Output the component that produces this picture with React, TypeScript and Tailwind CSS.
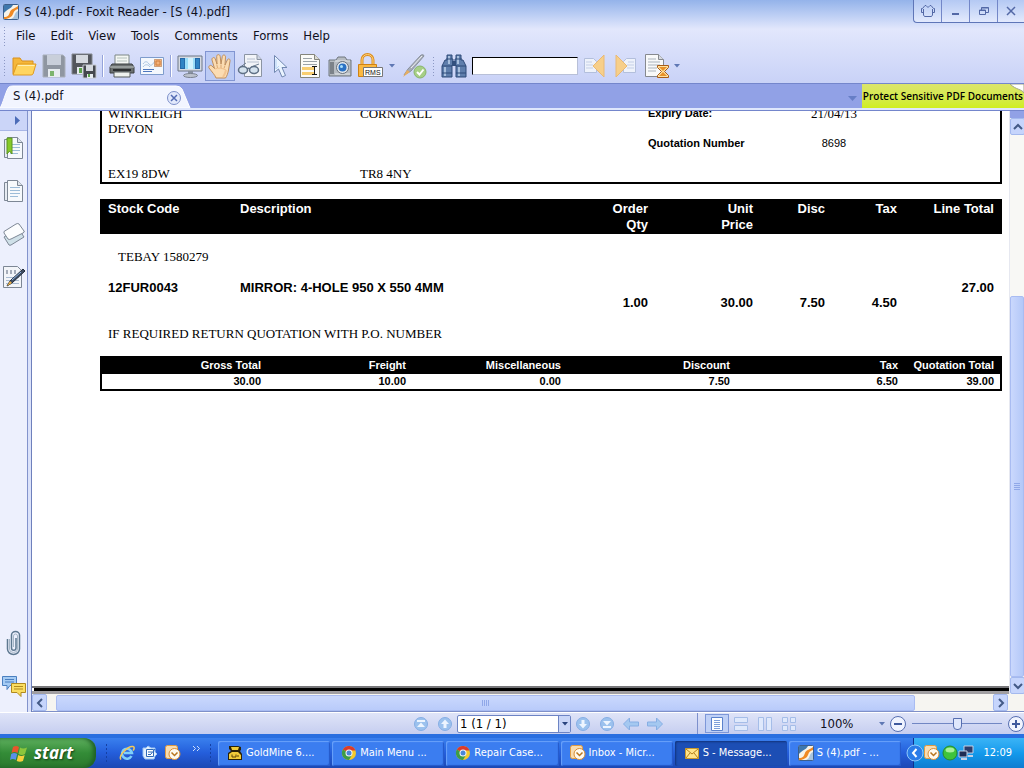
import type { ReactNode } from "react"

const MENUS = ["File", "Edit", "View", "Tools", "Comments", "Forms", "Help"]

const ADDRESS_ROWS = [
  ["WINKLEIGH", "CORNWALL", "Expiry Date:", ""],
  ["DEVON", "", "", ""],
  ["", "", "Quotation Number", "8698"],
  ["", "", "", ""],
  ["EX19 8DW", "TR8 4NY", "", ""],
]

const EXPIRY_DATE = "21/04/13"

const TOTALS = [
  { label: "Gross Total", value: "30.00", width: "" },
  { label: "Freight", value: "10.00", width: "w-[145px]" },
  { label: "Miscellaneous", value: "0.00", width: "w-[155px]" },
  { label: "Discount", value: "7.50", width: "w-[169px]" },
  { label: "Tax", value: "6.50", width: "w-[168px]" },
  { label: "Quotation Total", value: "39.00", width: "w-[96px]" },
]

interface IconProps {
  children: ReactNode
  size?: number
}

function Icon({ children, size = 26 }: IconProps) {
  return (
    <svg width={size} height={size} viewBox={`0 0 ${size} ${size}`} fill="none" aria-hidden="true" className="shrink-0">
      {children}
    </svg>
  )
}

function FoxitLogo() {
  return (
    <Icon size={16}>
      <rect x="0.5" y="0.5" width="15" height="15" rx="1" fill="#f7f3ea" stroke="#3d5f8c" />
      <path d="M1 1h9C8 5 4 5 1 9z" fill="#3f78ad" />
      <path d="M15 2v3c-3 1-4 2-5 5s-4 4-7 5H1v-2c4 0 5-2 6-5s4-3 8-6z" fill="#f08a24" />
      <path d="M15 7v8H8c3-1 3-3 4-5s1-2 3-3z" fill="#a9c4de" />
    </Icon>
  )
}

function FolderIcon() {
  return (
    <Icon>
      <path d="M2 21V5h7l2 3h11v4" fill="#f5b73a" stroke="#d9901c" />
      <path d="M2 22 6 11h19l-3 10q-.5 1-2 1z" fill="#ffd560" stroke="#e09a20" />
      <path d="M7 12.500h16.500" stroke="#fff0b4" />
    </Icon>
  )
}

function DiskIcon() {
  return (
    <Icon>
      <path d="M2 2h20l2 2v20H2z" fill="#8f96a1" stroke="#aab0bb" />
      <path d="M6 2h14v10H6z" fill="#c9cfda" />
      <path d="M7 16h12v8H7z" fill="#e7ecef" />
      <path d="M9 18h4v5H9z" fill="#7cb46c" />
    </Icon>
  )
}

function SaveAllIcon() {
  return (
    <Icon>
      <path d="M1 1h20v20H1z" fill="#53565c" stroke="#85898f" />
      <path d="M5 2h12v8H5z" fill="#d5d9df" />
      <path d="M6 14h8v7H6z" fill="#e7ecef" />
      <path d="M8 15h3v5H8z" fill="#5da34a" />
      <path d="M12 12h13v13H12z" fill="#45484e" stroke="#c5c9cf" />
      <path d="M15 12h7v6h-7z" fill="#d5d9df" />
      <path d="M16 21h6v4h-6z" fill="#e7ecef" />
      <path d="M17 21h2v3h-2z" fill="#5da34a" />
    </Icon>
  )
}

function PrinterIcon() {
  return (
    <Icon>
      <path d="M6 2h14v10H6z" fill="#f4f7f4" stroke="#7d8785" />
      <path d="M8 5h10M8 8h10" stroke="#b4c0bb" />
      <path d="M3 11h20l2 3v6H1v-6z" fill="#6b7070" stroke="#3a3e40" />
      <path d="M1 14h24" stroke="#c3c9c7" />
      <path d="M4 16h18v2H4z" fill="#2c2f30" />
      <path d="M5 19h16v5H5z" fill="#eef2ee" stroke="#555b5b" />
    </Icon>
  )
}

function MailCardIcon() {
  return (
    <Icon>
      <path d="M1.500 4.500h23v17h-23z" fill="#f4f8fd" stroke="#7e9ccc" />
      <path d="M4 11c2-3 4-3 6 0s4 0 6-3" stroke="#a8c4e0" />
      <path d="M4 14c2-3 5-3 7 0" stroke="#a8c4e0" />
      <path d="M15.500 6.500h7v7h-7z" fill="#f3b27a" stroke="#a8683a" strokeDasharray="1 1" />
      <path d="M17 8h4v4h-4z" stroke="#d08040" />
      <path d="M4 16.500h11M4 18.500h9" stroke="#4e78be" />
    </Icon>
  )
}

function MonitorIcon() {
  return (
    <Icon>
      <path d="M1 3h24v15H1z" fill="#d5dae2" stroke="#6c7685" />
      <path d="M3 5h20v11H3z" fill="#2468a8" />
      <path d="M8 5h10v11H8z" fill="#9adcf8" />
      <path d="M11 5h5v11h-5z" fill="#d2f2fe" />
      <path d="M4 6h3v9H4zM19 6h3v9h-3z" fill="#2f83c4" />
      <path d="M11 18h5v3h-5z" fill="#8891a0" />
      <ellipse cx="13.500" cy="22.500" rx="7" ry="2" fill="#bcc2cd" stroke="#7a8290" />
    </Icon>
  )
}

function HandIcon() {
  return (
    <Icon>
      <path
        d="M9 25c-1-3-4-6-7-10-1-2 1.500-3.500 3-2l2.500 2.500L5 7c-.5-2.500 2.500-3.500 3.300-1L10 11l-.3-7.500c0-2.500 3.300-2.500 3.500 0L14 11l1.300-7.500c.4-2.300 3.500-1.800 3.200.6L18 12l2.300-5c.9-2 3.300-1 2.700 1.200L21.500 17c-.5 3-1.500 6-3 8z"
        fill="#fbdcb2"
        stroke="#c08f5c"
      />
      <path d="M9.800 11.500 10.500 15M14 11.500V15M18 12.500 17 15.500" stroke="#dba873" />
      <path d="M8 16c3-1.500 7-1 11 1" stroke="#f0c08c" />
      <path d="M19 17c-.5 3-1.500 5-3 7" stroke="#f2c491" strokeWidth="2" />
    </Icon>
  )
}

function GlassesPageIcon() {
  return (
    <Icon>
      <path d="M7.500 1.500H20l4.500 5v17h-17z" fill="#f2f4f8" stroke="#8b94a3" />
      <path d="M20 1.500v5h4.500" fill="#cfd6e2" stroke="#8b94a3" />
      <path d="M10 6h8M10 9h12" stroke="#b7c0d0" />
      <path d="M2 15 9 10M14 14l8-3" stroke="#6d7d91" />
      <ellipse cx="6" cy="17" rx="4.500" ry="3.500" fill="#d4e2ee" stroke="#5f7085" strokeWidth="1.500" />
      <ellipse cx="17" cy="17" rx="4.500" ry="3.500" fill="#d4e2ee" stroke="#5f7085" strokeWidth="1.500" />
      <path d="M10 16q1.500-1.500 3 0" stroke="#5f7085" strokeWidth="1.500" />
    </Icon>
  )
}

function PointerIcon() {
  return (
    <Icon>
      <path d="M7.500 2.500v17l4-3.500 3.500 8 3.500-1.500-3.500-8h5z" fill="#eaf4ff" stroke="#7187b0" />
      <path d="M9 6v10l3-3" stroke="#b4d2f4" />
    </Icon>
  )
}

function TextSelectIcon() {
  return (
    <Icon>
      <path d="M3.500 1.500h14l5 5v18h-19z" fill="#fbfbf8" stroke="#84857c" />
      <path d="M17.500 1.500v5h5" fill="#dcdcd4" stroke="#84857c" />
      <path d="M6 5.500h9M6 8.500h14M6 11.500h14" stroke="#9ba3a8" />
      <path d="M5 14h12v3H5zM5 19h12v3H5z" fill="#f8ce72" />
      <path d="M15 13.500h5M15 21.500h5M17.500 13.500v8" stroke="#151515" />
    </Icon>
  )
}

function CameraIcon() {
  return (
    <Icon>
      <path d="M2 7h7l2-3h7l2 3h4v16H2z" fill="#b7bcc2" stroke="#6f767f" />
      <path d="M3 9h4v12H3z" fill="#7c8289" />
      <path d="M8 8h15M8 21h15" stroke="#e4e7ea" />
      <circle cx="15.500" cy="14.500" r="6" fill="#e6eaee" stroke="#67707c" />
      <circle cx="15.500" cy="14.500" r="4" fill="#2c72c4" />
      <circle cx="14.500" cy="13.500" r="1.500" fill="#a9e0fb" />
    </Icon>
  )
}

function RmsIcon() {
  return (
    <Icon>
      <path d="M5 11V7a5.500 5.500 0 0 1 11 0v4" stroke="#dc8e1f" strokeWidth="3" />
      <path d="M5 11V7a5.500 5.500 0 0 1 11 0v4" stroke="#ffd27a" />
      <path d="M1.500 11.500h18v12h-18z" fill="#fbb840" stroke="#cf8214" />
      <path d="M6.500 14.500h19v9h-19z" fill="#fff" stroke="#777" />
      <text x="8" y="22" fontSize="7" fill="#111" fontFamily="Liberation Sans, sans-serif">RMS</text>
    </Icon>
  )
}

function SignIcon() {
  return (
    <Icon>
      <path d="M3 22 7 16 20 2q3-1 3 1L10 18z" fill="#a6acb6" stroke="#8a919d" />
      <path d="M10 15 21 3" stroke="#eef1f5" />
      <path d="m2 24 4-7 3 2z" fill="#e6ae62" />
      <circle cx="19" cy="19" r="6" fill="#a6cf86" stroke="#89b46c" />
      <path d="m16 19 2.500 2.500 4-5" stroke="#fff" strokeWidth="2" />
    </Icon>
  )
}

function BinocularsIcon() {
  return (
    <Icon>
      <path d="M6 2h5v4h1v6h-1v12H1V13l3-6h2zM15 2h5v5h2l3 6v11H15V12h-1V6h1z" fill="#5f7eac" stroke="#2f4a78" />
      <path d="M11 8h4v5h-4z" fill="#32507e" />
      <path d="M4 14v9M18 14v9M8 3v8M17 3v8" stroke="#a9c0de" strokeWidth="2" />
      <path d="M1 13h10M15 13h10M1 20h10M15 20h10M5 6h6M15 6h6" stroke="#2f4a78" />
    </Icon>
  )
}

function ResultIcon({ next = false }: { next?: boolean }) {
  return (
    <Icon>
      <g transform={next ? "matrix(-1 0 0 1 26 0)" : undefined}>
        <path d="M2.500 5.500h9l3 3v11h-12z" fill="#eef2fb" stroke="#b3bfdc" />
        <path d="M4 9h6M4 12h7M4 15h7" stroke="#c4cfe6" />
        <path d="M22 2v22L11 13z" fill="#f7cf8a" stroke="#e9b974" />
      </g>
    </Icon>
  )
}

function HourglassPageIcon() {
  return (
    <Icon>
      <path d="M1.500 1.500h13l5 5v17h-18z" fill="#f8f9fa" stroke="#86898f" />
      <path d="M14.500 1.500v5h5" fill="#d7dbe1" stroke="#86898f" />
      <path d="M4 6h8M4 9h12M4 12h12M4 15h9M4 18h8" stroke="#aab3bc" />
      <path d="M13.500 12.500h11v2l-4 4 4 4v2h-11v-2l4-4-4-4z" fill="#ffe1a0" stroke="#a85b16" />
      <path d="M15 14h8l-4 4zM19 19l4 4h-8z" fill="#e8912a" />
    </Icon>
  )
}

function Caret() {
  return (
    <svg width="6" height="4" viewBox="0 0 6 4" aria-hidden="true">
      <path d="M0 0h6L3 3.500z" fill="#5f78b4" />
    </svg>
  )
}

function ToolButton({ label, active, children }: { label: string; active?: boolean; children: ReactNode }) {
  return (
    <button
      type="button"
      aria-label={label}
      className={
        active
          ? "flex h-[30px] w-[30px] items-center justify-center border border-[#8195d2] bg-[#bccbf5]"
          : "flex h-[30px] w-[30px] items-center justify-center"
      }
    >
      {children}
    </button>
  )
}

function Grip() {
  return <span className="h-5 w-[3px] bg-[radial-gradient(#8c98c4_1px,transparent_1px)] bg-[size:3px_3px]" />
}

function Separator() {
  return (
    <span className="flex w-2 justify-center">
      <span className="h-[22px] w-[2px] border-l border-[#94a3da] bg-white" />
    </span>
  )
}

function TitleBar() {
  return (
    <div className="flex h-[23px] items-start justify-between">
      <div className="flex h-[23px] items-center gap-[5px] pl-[3px]">
        <FoxitLogo />
        <h1>S (4).pdf - Foxit Reader - [S (4).pdf]</h1>
      </div>
      <div className="flex h-[23px] divide-x divide-[#7387c8] overflow-hidden rounded-bl border-b border-l border-[#5f76b8] bg-linear-to-b from-[#b4c9f3] to-[#e3eafd]">
        <button type="button" aria-label="Skin" className="flex w-7 items-center justify-center">
          <svg width="14" height="12" viewBox="0 0 14 12" fill="none">
            <path d="M5 .5H4L1.500 3.500H.5v4h2V10l1 1.500h7l1-1.500V7.500h2v-4h-1L10 .5H9L7 2.500zM2.500 4v4M11.500 4v4" stroke="#5368a6" />
          </svg>
        </button>
        <button type="button" aria-label="Minimize" className="flex w-7 items-center justify-center">
          <svg width="12" height="12" viewBox="0 0 12 12"><path d="M2 8h7v2H2z" fill="#5368a6" /></svg>
        </button>
        <button type="button" aria-label="Restore" className="flex w-7 items-center justify-center">
          <svg width="10" height="10" viewBox="0 0 10 10" fill="none">
            <path d="M2.500 4V1.500h7v5H7M.5 4h6v4.500h-6zM2.500 2h7M.5 4.500h6" stroke="#5368a6" />
          </svg>
        </button>
        <button type="button" aria-label="Close" className="flex w-[26px] items-center justify-center">
          <svg width="10" height="10" viewBox="0 0 10 10"><path d="m1 1 8 8M9 1 1 9" stroke="#5368a6" strokeWidth="1.500" /></svg>
        </button>
      </div>
    </div>
  )
}

function Toolbar() {
  return (
    <div className="flex h-[34px] items-center pl-[3px]">
      <Grip />
      <div className="ml-[3px] flex items-center">
        <ToolButton label="Open"><FolderIcon /></ToolButton>
        <ToolButton label="Save"><DiskIcon /></ToolButton>
        <ToolButton label="Save all"><SaveAllIcon /></ToolButton>
        <Separator />
        <ToolButton label="Print"><PrinterIcon /></ToolButton>
        <ToolButton label="Email"><MailCardIcon /></ToolButton>
        <Separator />
        <ToolButton label="Full screen"><MonitorIcon /></ToolButton>
        <ToolButton label="Hand" active><HandIcon /></ToolButton>
        <ToolButton label="Read mode"><GlassesPageIcon /></ToolButton>
        <ToolButton label="Select annotation"><PointerIcon /></ToolButton>
        <ToolButton label="Select text"><TextSelectIcon /></ToolButton>
        <ToolButton label="Snapshot"><CameraIcon /></ToolButton>
        <ToolButton label="RMS protect"><RmsIcon /></ToolButton>
        <button type="button" aria-label="RMS options" className="px-1"><Caret /></button>
        <ToolButton label="Sign"><SignIcon /></ToolButton>
      </div>
      <div className="ml-[3px] flex items-center">
        <Grip />
        <span className="ml-1"><ToolButton label="Find"><BinocularsIcon /></ToolButton></span>
        <input
          type="text"
          aria-label="Find text"
          className="ml-[3px] h-[18px] w-[106px] border border-[#b8c0d8] border-t-black border-l-black bg-white px-1 text-xs"
        />
        <span className="ml-[2px]"><ToolButton label="Previous result"><ResultIcon /></ToolButton></span>
        <ToolButton label="Next result"><ResultIcon next /></ToolButton>
        <span className="ml-[2px]"><ToolButton label="Search all"><HourglassPageIcon /></ToolButton></span>
        <button type="button" aria-label="Search options" className="ml-[2px]"><Caret /></button>
      </div>
    </div>
  )
}

function TabBar() {
  return (
    <div className="flex h-[25px] border-t border-[#7486cc] bg-[#91a1e6]">
      <div className="relative flex w-[191px] items-center justify-between pr-2.5 pl-[13px]">
        <svg viewBox="0 0 191 24" preserveAspectRatio="none" className="absolute inset-0 h-full w-full" aria-hidden="true">
          <path d="M0 24C3 20 6 6 9 3q1-1 4-1h163q4 0 6 3l8 19z" fill="#f2f5ff" stroke="#fff" />
        </svg>
        <span className="relative">S (4).pdf</span>
        <button type="button" aria-label="Close tab" className="relative mt-1">
          <svg width="14" height="14" viewBox="0 0 14 14" fill="none">
            <circle cx="7" cy="7" r="6.500" fill="#e2e9fc" stroke="#7c8fc9" />
            <path d="m4 4 6 6m0-6-6 6" stroke="#536cb4" strokeWidth="1.500" />
          </svg>
        </button>
      </div>
      <div className="flex flex-1 items-center justify-end pt-1 pr-[5px]">
        <button type="button" aria-label="Tab list">
          <svg width="9" height="5" viewBox="0 0 9 5"><path d="M0 0h9L4.500 5z" fill="#667ec6" /></svg>
        </button>
      </div>
      <a
        href="#protect"
        className="relative flex shrink-0 items-center bg-linear-to-b from-[#dce56a] to-[#d0ee1c] px-px font-['Open_Sans',sans-serif] text-[10px] leading-6 font-semibold whitespace-nowrap text-black"
      >
        <svg width="14" height="10" viewBox="0 0 14 10" className="absolute top-0 right-0" aria-hidden="true">
          <path d="M0 0h14v9C12 5 6 6 0 0z" fill="#fff" stroke="#a4a886" />
        </svg>
        <span className="relative">Protect Sensitive PDF Documents</span>
      </a>
    </div>
  )
}

function PageSheet({ children }: { children?: ReactNode }) {
  return (
    <Icon size={24}>
      <path d="M2.500 3.500h13v18h-13z" fill="#e6ebf2" stroke="#7d8795" />
      <path d="M5.500 1.500h10l5 5v16h-15z" fill="#f6f9fc" stroke="#7d8795" />
      <path d="M15.500 1.500v5h5" fill="#dde4ec" stroke="#7d8795" />
      <path d="M8 8.500h10M8 11.500h10M8 14.500h10M8 17.500h8" stroke="#9cbcd8" />
      {children}
    </Icon>
  )
}

function SideNav() {
  return (
    <nav className="flex w-7 shrink-0 flex-col items-center border-r border-[#8293cc] bg-[#edf0fd]">
      <button type="button" aria-label="Expand panel" className="flex h-5 w-full items-center justify-center border-b border-[#a9b6e6] bg-[#cbd5f8] pl-2">
        <svg width="5" height="9" viewBox="0 0 5 9"><path d="M0 0v9l5-4.500z" fill="#4c6cb8" /></svg>
      </button>
      <div className="mt-[5px] flex flex-1 flex-col gap-[19px]">
        <button type="button" aria-label="Bookmarks">
          <PageSheet><path d="M5 2h5v16l-2.500-3L5 18z" fill="#86c92a" stroke="#5a9420" /></PageSheet>
        </button>
        <button type="button" aria-label="Pages"><PageSheet /></button>
        <button type="button" aria-label="Layers">
          <Icon size={24}>
            <path d="m2 15 14-9 6 9-13 8q-1 .5-2 0z" fill="#cfe0e8" stroke="#7d8795" />
            <path d="M2 9.500 14 2q2-1 3 0l5 7q1 1-1 2L9 17q-2 1-3 0l-4-6z" fill="#fcfdfe" stroke="#7d8795" />
          </Icon>
        </button>
        <button type="button" aria-label="Signatures">
          <Icon size={24}>
            <path d="M1.500 1.500h14l4 4v17h-18z" fill="#f3f5f9" stroke="#7d8795" />
            <path d="M4 5h2v4H4zM8 5h2v4H8zM12 5h2v4h-2z" fill="#a6adba" />
            <path d="M4 12.500h13M4 15.500h13M4 18.500h13" stroke="#a9bbd2" />
            <path d="m5 21 3-5L21 4l2 2L10 18z" fill="#3f4d63" stroke="#232c3b" />
            <path d="m5 21 3-5 2 2z" fill="#e8b04a" />
            <path d="m10 15 9-8" stroke="#91b8e4" />
          </Icon>
        </button>
      </div>
      <div className="mb-3 flex flex-col gap-[18px]">
        <button type="button" aria-label="Attachments">
          <Icon size={26}>
            <path d="M6.500 9v10a5.500 5 0 0 0 12 0V5a4 3.500 0 0 0-8 0v13a2 2 0 0 0 4.500 0V8" stroke="#5e7890" strokeWidth="1.500" />
            <path d="M8.500 9v10a3.500 3 0 0 0 8 0V6a2 2 0 0 0-4 0v11" stroke="#a5b6c6" />
          </Icon>
        </button>
        <button type="button" aria-label="Comments">
          <Icon size={26}>
            <path d="M1.500 2.500h14v9H9l-3 4v-4H1.500z" fill="#a5cbf4" stroke="#4a7fc0" />
            <path d="M4 5.500h9M4 8h9" stroke="#4a7fc0" />
            <path d="M10.500 9.500h14v9H20v4l-4-4h-5.500z" fill="#fade62" stroke="#b18a1e" />
            <path d="M13 12.500h9M13 15h9" stroke="#b18a1e" />
          </Icon>
        </button>
      </div>
    </nav>
  )
}

function LineItems() {
  return (
    <table className="mt-[15px] w-full table-fixed border-collapse text-[13px] leading-4 font-bold">
      <colgroup>
        <col className="w-[132px]" />
        <col />
        <col className="w-20" />
        <col className="w-[105px]" />
        <col className="w-[72px]" />
        <col className="w-[72px]" />
        <col className="w-[97px]" />
      </colgroup>
      <thead>
        <tr className="h-[35px] bg-black text-right align-top text-white">
          <th className="px-2 pt-[2px] text-left">Stock Code</th>
          <th className="px-2 pt-[2px] text-left">Description</th>
          <th className="px-2 pt-[2px]">Order<br />Qty</th>
          <th className="px-2 pt-[2px]">Unit<br />Price</th>
          <th className="px-2 pt-[2px]">Disc</th>
          <th className="px-2 pt-[2px]">Tax</th>
          <th className="px-2 pt-[2px]">Line Total</th>
        </tr>
      </thead>
      <tbody>
        <tr className="h-[46px] font-['Liberation_Serif',serif] font-normal">
          <td colSpan={7} className="pl-[18px]">TEBAY 1580279</td>
        </tr>
        <tr className="h-[31px] text-right align-top">
          <td className="px-2 text-left">12FUR0043</td>
          <td className="px-2 text-left whitespace-nowrap">MIRROR: 4-HOLE 950 X 550 4MM</td>
          <td className="px-2 pt-[15px]">1.00</td>
          <td className="px-2 pt-[15px]">30.00</td>
          <td className="px-2 pt-[15px]">7.50</td>
          <td className="px-2 pt-[15px]">4.50</td>
          <td className="px-2">27.00</td>
        </tr>
      </tbody>
    </table>
  )
}

function Quotation() {
  return (
    <article className="min-w-0 flex-1 overflow-hidden bg-white pr-[7px] pl-[68px] font-['Liberation_Sans',sans-serif] text-[13px] text-black">
      <div className="flex h-[73px] flex-col justify-end overflow-hidden border-2 border-t-0 border-black pb-px pl-1.5">
        {ADDRESS_ROWS.map((row, i) => (
          <div key={i} className="flex h-[15px] shrink-0 leading-[15px]">
            <span className="w-[252px] font-['Liberation_Serif',serif]">{row[0]}</span>
            <span className="flex-1 font-['Liberation_Serif',serif]">{row[1]}</span>
            <span className="w-[132px] text-[11px] leading-[15px] font-bold">{row[2]}</span>
            {i === 0 ? (
              <span className="w-[108px] text-center font-['Liberation_Serif',serif]">{EXPIRY_DATE}</span>
            ) : (
              <span className="w-[108px] text-center text-[11px] leading-[15px]">{row[3]}</span>
            )}
            <span className="w-[112px]" />
          </div>
        ))}
      </div>
      <LineItems />
      <p className="pt-[15px] pb-[14px] pl-2 font-['Liberation_Serif',serif] leading-4">
        IF REQUIRED RETURN QUOTATION WITH P.O. NUMBER
      </p>
      <table className="w-full table-fixed border-separate border-spacing-0 border-2 border-t-0 border-black text-right text-[11px] leading-[15px] font-bold">
        <thead>
          <tr className="h-[18px] bg-black text-white">
            {TOTALS.map(t => (
              <th key={t.label} className={`${t.width} pr-1.5 whitespace-nowrap`}>{t.label}</th>
            ))}
          </tr>
        </thead>
        <tbody>
          <tr>
            {TOTALS.map(t => (
              <td key={t.label} className="pr-1.5">{t.value}</td>
            ))}
          </tr>
        </tbody>
      </table>
    </article>
  )
}

function ScrollButton({ label, path }: { label: string; path: string }) {
  return (
    <button type="button" aria-label={label} className="flex h-[17px] w-[15px] shrink-0 items-center justify-center rounded-xs border border-[#a4b9ee] bg-[#c6d5fc]">
      <svg width="10" height="10" viewBox="0 0 10 10" fill="none">
        <path d={path} stroke="#435a86" strokeWidth="2" />
      </svg>
    </button>
  )
}

function Viewer() {
  return (
    <div className="flex min-w-0 flex-1 flex-col border-l border-[#6e80bc]">
      <div className="flex min-h-0 flex-1">
        <div className="flex min-w-0 flex-1 flex-col">
          <Quotation />
          <div className="h-[2px] bg-[#77777a]" />
          <div className="ml-[2px] h-[3px] bg-black" />
          <div className="h-[3px] bg-[#a19fa2]" />
        </div>
        <div className="flex w-[15px] flex-col border-l border-[#e6e8f0] bg-[#f8f8f5]">
          <div className="h-[7px] shrink-0 bg-[#91a1e6]" />
          <ScrollButton label="Scroll up" path="m1 7 4-4 4 4" />
          <div className="flex-[162] shrink-0" />
          <div className="flex flex-[380] flex-col items-center justify-center gap-px rounded-xs border border-[#a9bcf2] bg-linear-to-r from-[#cad8fd] to-[#b4c8f8]">
            <span className="h-px w-1.5 bg-[#90a8e8]" />
            <span className="h-px w-1.5 bg-[#90a8e8]" />
            <span className="h-px w-1.5 bg-[#90a8e8]" />
            <span className="h-px w-1.5 bg-[#90a8e8]" />
          </div>
          <ScrollButton label="Scroll down" path="m1 3 4 4 4-4" />
        </div>
      </div>
      <div className="flex h-[18px] shrink-0 items-center border-b border-[#7f90c8] bg-[#f6f5f1] pr-4">
        <ScrollButton label="Scroll left" path="M7 1 3 5l4 4" />
        <div className="w-[9px]" />
        <div className="flex h-4 flex-[860] items-center justify-center gap-px rounded-xs border border-[#a9bcf2] bg-linear-to-b from-[#cad8fd] to-[#b9cbfa]">
          <span className="h-1.5 w-px bg-[#90a8e8]" />
          <span className="h-1.5 w-px bg-[#90a8e8]" />
          <span className="h-1.5 w-px bg-[#90a8e8]" />
          <span className="h-1.5 w-px bg-[#90a8e8]" />
        </div>
        <div className="flex-[78]" />
        <ScrollButton label="Scroll right" path="m3 1 4 4-4 4" />
      </div>
    </div>
  )
}

function RoundNav({ label, path }: { label: string; path: string }) {
  return (
    <button type="button" aria-label={label} className="flex w-6 items-center justify-center">
      <svg width="14" height="14" viewBox="0 0 14 14" fill="none">
        <circle cx="7" cy="7" r="6.500" fill="#9cc2ee" stroke="#86aee4" />
        <path d={path} fill="#edf5ff" />
      </svg>
    </button>
  )
}

function ViewMode({ label, active, path }: { label: string; active?: boolean; path: string }) {
  return (
    <button
      type="button"
      aria-label={label}
      className={active ? "flex h-[19px] w-6 items-center justify-center border border-[#7d97d8] bg-[#bfd0f6]" : "flex h-[19px] w-6 items-center justify-center"}
    >
      <svg width="16" height="16" viewBox="0 0 16 16">
        <path d={path} fill={active ? "#fdfeff" : "#dfe9fc"} stroke={active ? "#5b82cc" : "#a5bde8"} />
        {active && <path d="M5 4.500h6M5 6.500h6M5 8.500h6M5 10.500h6M5 12.500h6" stroke="#7fa0da" />}
      </svg>
    </button>
  )
}

function StatusBar() {
  return (
    <footer className="flex h-[22px] shrink-0 items-center justify-end border-t border-white bg-linear-to-b from-[#dfe4f8] to-[#c6cef0] text-[13px]">
      <RoundNav label="First page" path="M3 3h8v2H3zM7 5.500l4 4.500H3z" />
      <RoundNav label="Previous page" path="M7 2.500 11 7H8.500v4h-3V7H3z" />
      <div className="relative">
        <select aria-label="Page" className="block h-[18px] w-[114px] appearance-none rounded-xs border border-[#6d84c4] bg-white pl-[2px] leading-4 text-black">
          <option>1 (1 / 1)</option>
        </select>
        <span className="pointer-events-none absolute top-px right-px flex h-4 w-3 items-center justify-center border-l border-[#6d84c4] bg-[#c9d6f8]">
          <svg width="6" height="4" viewBox="0 0 6 4"><path d="M0 0h6L3 3.500z" fill="#28447e" /></svg>
        </span>
      </div>
      <RoundNav label="Next page" path="M7 11.500 3 7h2.500V3h3v4H11z" />
      <RoundNav label="Last page" path="M3 9h8v2H3zM7 8.500 3 4h8z" />
      <button type="button" aria-label="Previous view" className="flex w-6 justify-center">
        <svg width="16" height="14" viewBox="0 0 16 14"><path d="m.5 7 6-6v4h9v4h-9v4z" fill="#a4c8f0" stroke="#86aee4" /></svg>
      </button>
      <button type="button" aria-label="Next view" className="flex w-6 justify-center">
        <svg width="16" height="14" viewBox="0 0 16 14"><path d="m15.500 7-6-6v4h-9v4h9v4z" fill="#a4c8f0" stroke="#86aee4" /></svg>
      </button>
      <span className="mr-[7px] ml-[30px] h-full w-px bg-[#7d90cc]" />
      <ViewMode label="Single page" active path="M2.500 1.500h11v13h-11z" />
      <ViewMode label="Continuous" path="M1.500 1.500h13v5h-13zM1.500 9.500h13v5h-13z" />
      <ViewMode label="Facing" path="M1.500 1.500h5v13h-5zM9.500 1.500h5v13h-5z" />
      <ViewMode label="Continuous facing" path="M1.500 1.500h5v5h-5zM9.500 1.500h5v5h-5zM1.500 9.500h5v5h-5zM9.500 9.500h5v5h-5z" />
      <span className="ml-[19px] w-[59px]">100%</span>
      <button type="button" aria-label="Zoom levels" className="mr-[5px]"><Caret /></button>
      <button type="button" aria-label="Zoom out">
        <svg width="16" height="16" viewBox="0 0 16 16" fill="none">
          <circle cx="8" cy="8" r="7.500" fill="#f0f4ff" stroke="#566eb0" />
          <path d="M4 8h8" stroke="#3f5a9e" strokeWidth="2" />
        </svg>
      </button>
      <input
        type="range"
        aria-label="Zoom"
        defaultValue={50}
        className="mx-1.5 h-4 w-[90px] appearance-none bg-transparent bg-linear-to-b from-[#7187c4] to-[#7187c4] bg-[size:100%_1px] bg-center bg-no-repeat [&::-webkit-slider-thumb]:h-3 [&::-webkit-slider-thumb]:w-[9px] [&::-webkit-slider-thumb]:appearance-none [&::-webkit-slider-thumb]:rounded-b [&::-webkit-slider-thumb]:border [&::-webkit-slider-thumb]:border-[#566eb0] [&::-webkit-slider-thumb]:bg-[#dfe7fc]"
      />
      <button type="button" aria-label="Zoom in">
        <svg width="16" height="16" viewBox="0 0 16 16" fill="none">
          <circle cx="8" cy="8" r="7.500" fill="#f0f4ff" stroke="#566eb0" />
          <path d="M4 8h8M8 4v8" stroke="#3f5a9e" strokeWidth="2" />
        </svg>
      </button>
    </footer>
  )
}

function ChromeIcon() {
  return (
    <Icon size={16}>
      <circle cx="8" cy="8" r="7" fill="#f4c92c" />
      <path d="M8 8 1.900 4.500A7 7 0 0 1 14.500 5.500H8z" fill="#dc3b2c" />
      <path d="M8 8 1.900 4.500A7 7 0 0 0 8 15l3-5z" fill="#3d9c48" />
      <circle cx="8" cy="8" r="3.500" fill="#f4f6fa" />
      <circle cx="8" cy="8" r="2.500" fill="#4a86d8" />
    </Icon>
  )
}

function OutlookIcon() {
  return (
    <Icon size={16}>
      <rect x="0.500" y="0.500" width="12" height="13" rx="2" fill="#f8dcb0" stroke="#e09a40" />
      <circle cx="9.500" cy="9" r="5.500" fill="#fffaf0" stroke="#d98d34" />
      <path d="m6.500 7.500 3 3 3-3" stroke="#b8741e" strokeWidth="1.500" />
    </Icon>
  )
}

function GoldMineIcon() {
  return (
    <Icon size={16}>
      <path d="M2 1h9l3 1v3l-1 1 2 3v6H1V8l3-2-2-2z" fill="#2a2208" />
      <path d="M4 2h8l-1 3H5zM2 9l3-2h6l3 3v4H2z" fill="#f0cc3a" />
      <path d="M5 9.500V12h4V9.500M11 10v2" stroke="#5a4308" />
    </Icon>
  )
}

function EnvelopeIcon() {
  return (
    <Icon size={16}>
      <path d="M1.500 3.500h13v10h-13z" fill="#ffe58a" stroke="#c9992c" />
      <path d="m2 4 6 5 6-5M2 13l4-5M14 13l-4-5" stroke="#b4801c" />
    </Icon>
  )
}

function IeIcon() {
  return (
    <Icon size={16}>
      <path d="M12.500 11a5 5 0 1 1 .5-3H5" stroke="#7fd0fa" strokeWidth="2.500" />
      <path d="M2 14.500C-1 11 9 .5 14 1.500c2 .5 1 3 0 4" stroke="#f4c95a" strokeWidth="1.500" />
    </Icon>
  )
}

function DesktopIcon() {
  return (
    <Icon size={16}>
      <path d="M1 3h3l2-2 3 2h4v4l2 2-2 2-1 3H3l-2-3z" fill="#e4f0fd" stroke="#9cc6f4" />
      <path d="M4.500 4.500h7v7h-7z" fill="#fff" stroke="#2e6ab8" />
      <path d="M6 7h4M6 9.500h3M9 9l4-5" stroke="#2e6ab8" />
    </Icon>
  )
}

const TASKS = [
  { label: "GoldMine 6....", icon: <GoldMineIcon /> },
  { label: "Main Menu ...", icon: <ChromeIcon /> },
  { label: "Repair Case...", icon: <ChromeIcon /> },
  { label: "Inbox - Micr...", icon: <OutlookIcon /> },
  { label: "S - Message...", icon: <EnvelopeIcon />, active: true },
  { label: "S (4).pdf - ...", icon: <FoxitLogo /> },
]

function TaskBar() {
  return (
    <div className="flex h-[30px] shrink-0 items-stretch bg-linear-to-b from-[#3a80ee] via-[#245edb] to-[#1c48b4] text-[11px] text-white">
      <button
        type="button"
        className="flex w-24 items-center gap-[5px] rounded-r-xl bg-linear-to-b from-[#5fb05f] via-[#338c37] to-[#2b782d] pl-[10px] font-['Open_Sans',sans-serif] text-[17px] font-bold italic shadow-[inset_-3px_0_4px_#1f5f26] [text-shadow:1px_1px_2px_#123d14]"
      >
        <svg width="19" height="17" viewBox="0 0 19 17" aria-hidden="true">
          <path d="M3 2q3-2 6 0L7.500 8q-3-2-6 0z" fill="#e8562c" />
          <path d="M10 2.500q3 2 7 0L15 9q-3 2-6.500 0z" fill="#8cc63c" />
          <path d="M1.200 9q3-2 6 0L5.700 15q-3-2-5.700 0z" fill="#5a90ea" />
          <path d="M8.200 10q3 2 6.500 0L13 16q-3 1.500-6.300 0z" fill="#f8d03c" />
        </svg>
        start
      </button>
      <div className="flex w-[122px] items-center pl-[9px]">
        <span className="h-5 w-[3px] bg-[radial-gradient(#1540a4_1px,transparent_1px)] bg-[size:3px_4px]" />
        <div className="ml-[11px] flex gap-[7px]">
          <button type="button" aria-label="Internet Explorer"><IeIcon /></button>
          <button type="button" aria-label="Show desktop"><DesktopIcon /></button>
          <button type="button" aria-label="Outlook"><OutlookIcon /></button>
        </div>
        <button type="button" aria-label="More" className="mb-2.5 ml-[11px]">
          <svg width="9" height="7" viewBox="0 0 9 7" fill="none"><path d="m1 1 2.500 2.500L1 6m4-5 2.500 2.500L5 6" stroke="#cfe0fc" /></svg>
        </button>
        <span className="ml-2 h-5 w-[3px] bg-[radial-gradient(#1540a4_1px,transparent_1px)] bg-[size:3px_4px]" />
      </div>
      <div className="flex min-w-0 flex-1 items-center gap-[2px] pr-3">
        {TASKS.map(t => (
          <button
            key={t.label}
            type="button"
            className={
              t.active
                ? "flex h-[25px] min-w-0 flex-1 items-center gap-[3px] rounded-xs bg-[#1c4eb4] pl-[9px] whitespace-nowrap shadow-[inset_1px_1px_2px_#12347c]"
                : "flex h-[25px] min-w-0 flex-1 items-center gap-[3px] rounded-xs bg-[#3b7df0] pl-[9px] whitespace-nowrap shadow-[inset_1px_1px_1px_#6ba2fa,inset_-1px_-1px_1px_#2458c8]"
            }
          >
            {t.icon}
            {t.label}
          </button>
        ))}
      </div>
      <div className="relative flex w-[111px] items-center border-l border-[#10308c] bg-linear-to-b from-[#3ab4f6] via-[#129aec] to-[#0f7cd0] pl-[10px]">
        <button type="button" aria-label="Show hidden icons" className="absolute top-1.5 -left-2 rounded-full">
          <svg width="18" height="18" viewBox="0 0 18 18" fill="none">
            <circle cx="9" cy="9" r="8" fill="#2a7ce8" stroke="#8fc8fa" />
            <path d="M10.500 5 7 9l3.500 4" stroke="#fff" strokeWidth="2" />
          </svg>
        </button>
        <OutlookIcon />
        <span className="ml-[2px]">
          <Icon size={16}>
            <circle cx="8" cy="8" r="7" fill="#3fc43c" stroke="#278a2c" />
            <ellipse cx="8" cy="5" rx="4.500" ry="2.500" fill="#a8f09a" />
          </Icon>
        </span>
        <Icon size={16}>
          <path d="M6 1h9v7H6z" fill="#2c3c6a" stroke="#c4d0e6" />
          <path d="M1 6h8v6H1z" fill="#1f2c54" stroke="#c4d0e6" />
          <path d="M3 14h6M10 11h5" stroke="#c4d0e6" strokeWidth="2" />
        </Icon>
        <time className="mr-3 ml-auto">12:09</time>
      </div>
    </div>
  )
}

export default function App() {
  return (
    <div className="flex h-screen flex-col overflow-hidden bg-white font-['DejaVu_Sans_Condensed','Noto_Sans',sans-serif] text-[13px] leading-4 text-[#10101c]">
      <header className="shrink-0 bg-linear-to-b from-[#94b3ea] via-[#e2e7fc] via-35% to-[#c9d2f7]">
        <TitleBar />
        <div className="flex h-[26px] items-center pl-[3px]">
          <Grip />
          <div className="ml-2.5 flex gap-[15px]">
            {MENUS.map(m => (
              <button key={m} type="button">{m}</button>
            ))}
          </div>
        </div>
        <Toolbar />
      </header>
      <TabBar />
      <div className="h-[3px] shrink-0 border-b border-[#7486cc] bg-[#dfe7fd]" />
      <main className="flex min-h-0 flex-1">
        <SideNav />
        <div className="w-[3px] bg-[#dbe2fa]" />
        <Viewer />
      </main>
      <StatusBar />
      <div className="h-1 shrink-0 bg-[#2a6fe0]" />
      <TaskBar />
    </div>
  )
}
